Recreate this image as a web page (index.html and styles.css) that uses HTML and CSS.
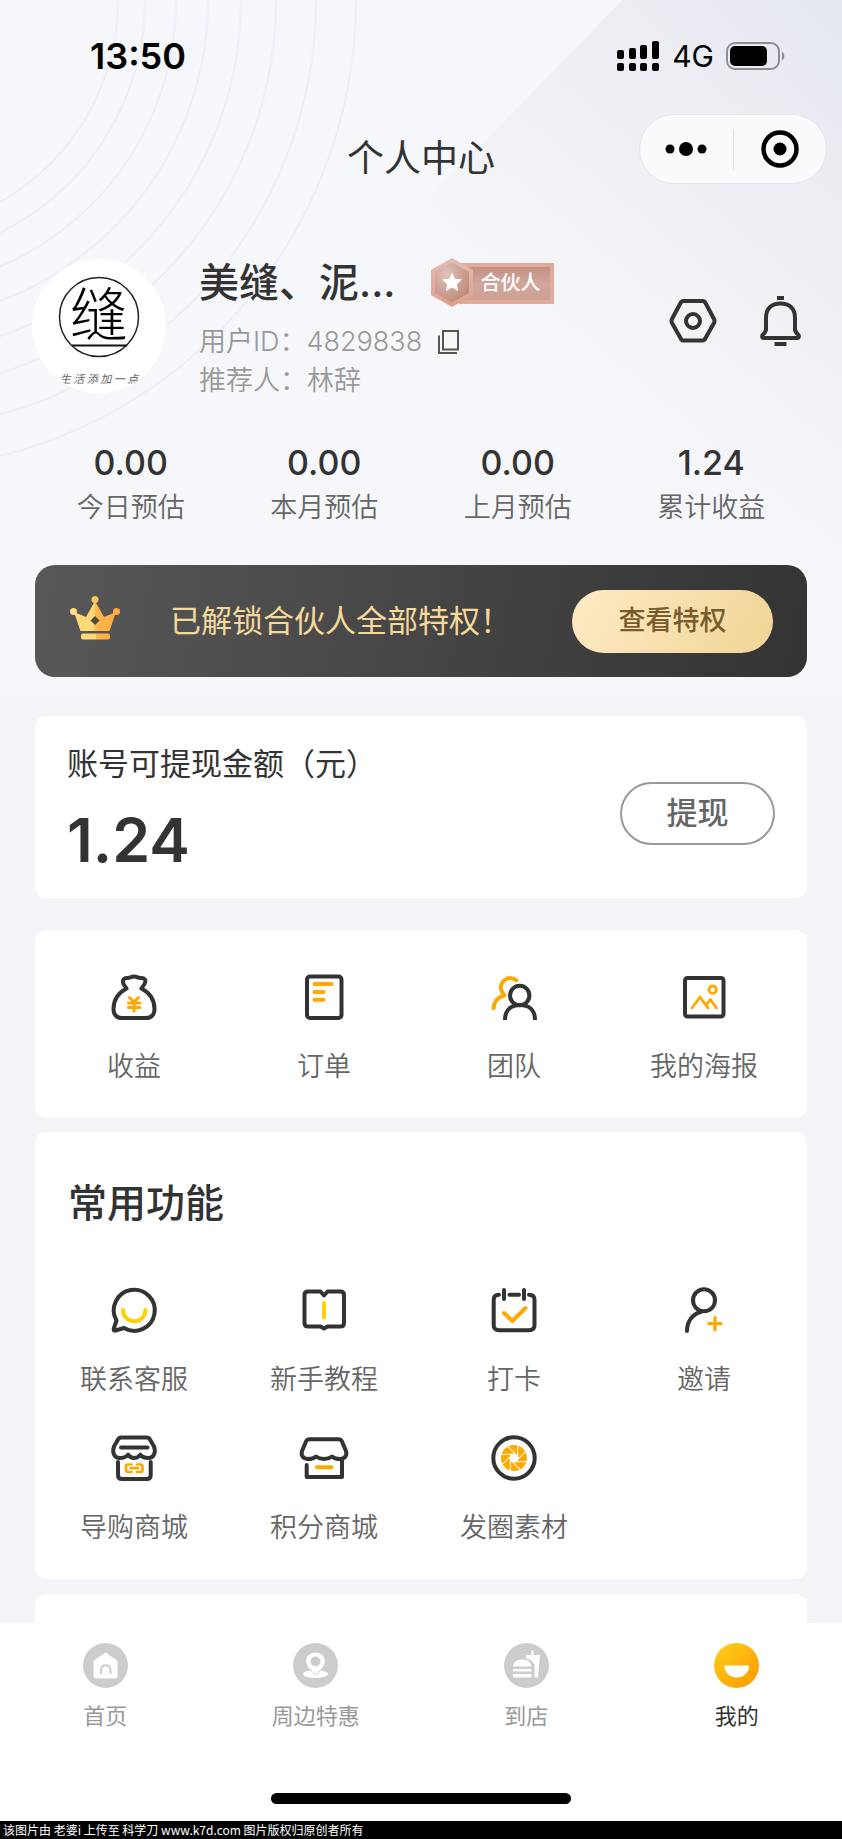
FILE: index.html
```html
<!DOCTYPE html>
<html lang="zh-CN">
<head>
<meta charset="utf-8">
<meta name="viewport" content="width=device-width, initial-scale=1">
<title>个人中心</title>
<link rel="stylesheet" href="styles.css">
</head>
<body>
<div class="page">
  <header class="hero">
    <svg class="hero-art" viewBox="0 0 842 694" preserveAspectRatio="xMinYMin slice" aria-hidden="true">
      <defs>
        <linearGradient id="sheen" gradientUnits="userSpaceOnUse" x1="800" y1="40" x2="500" y2="400">
          <stop offset="0" stop-color="#ebecf2"/>
          <stop offset="0.500" stop-color="#f0f1f5"/>
          <stop offset="1" stop-color="#f5f6f9" stop-opacity="0"/>
        </linearGradient>
        <linearGradient id="corner" gradientUnits="userSpaceOnUse" x1="842" y1="0" x2="730" y2="110">
          <stop offset="0" stop-color="#e5e8f0"/>
          <stop offset="1" stop-color="#e9eaf2" stop-opacity="0"/>
        </linearGradient>
      </defs>
      <path d="M623 0H842V694H560L300 330L397 230Z" fill="url(#sheen)"/>
      <path d="M640 0H842V300Z" fill="url(#corner)"/>
      <g fill="none" stroke="#eeeefa" stroke-width="2">
        <circle cx="-114" cy="0" r="232"/><circle cx="-114" cy="0" r="259"/>
        <circle cx="-114" cy="0" r="290"/><circle cx="-114" cy="0" r="322"/>
        <circle cx="-114" cy="0" r="355"/><circle cx="-114" cy="0" r="390"/>
        <circle cx="-114" cy="0" r="430"/><circle cx="-114" cy="0" r="470"/>
      </g>
    </svg>

    <div class="status">
      <span class="time">13:50</span>
      <div class="signals">
        <svg width="43" height="32" viewBox="0 0 43 32" aria-hidden="true">
          <rect x="0" y="10" width="7" height="9" rx="2"/><rect x="12" y="8" width="7" height="11" rx="2"/>
          <rect x="23" y="5" width="7" height="14" rx="2"/><rect x="35" y="1" width="7" height="18" rx="2"/>
          <rect x="0" y="23" width="7" height="8" rx="2"/><rect x="12" y="23" width="7" height="8" rx="2"/>
          <rect x="23" y="23" width="7" height="8" rx="2"/><rect x="35" y="23" width="7" height="8" rx="2"/>
        </svg>
        <span class="network">4G</span>
        <svg width="60" height="28" viewBox="0 0 60 28" aria-hidden="true">
          <rect x="1" y="1" width="52" height="26" rx="8" fill="none" stroke="#8d8e92" stroke-width="2"/>
          <rect x="4" y="4" width="37" height="20" rx="5"/>
          <path d="M56 9.500C59 11 59 17 56 18.500Z" fill="#8d8e92"/>
        </svg>
      </div>
    </div>

    <div class="nav">
      <h1 class="nav-title">个人中心</h1>
      <div class="capsule">
        <button class="capsule-btn" type="button" aria-label="更多">
          <svg width="42" height="16" viewBox="0 0 42 16"><circle cx="5" cy="8" r="4.500"/><circle cx="21" cy="8" r="7"/><circle cx="37" cy="8" r="4.500"/></svg>
        </button>
        <button class="capsule-btn capsule-close" type="button" aria-label="关闭">
          <svg width="38" height="38" viewBox="0 0 38 38"><circle cx="19" cy="19" r="16.500" fill="none" stroke="#000" stroke-width="4.500"/><circle cx="19" cy="19" r="6.500"/></svg>
        </button>
      </div>
    </div>

    <section class="profile">
      <svg class="avatar" viewBox="0 0 134 134" role="img" aria-label="头像">
        <defs><clipPath id="round"><circle cx="67" cy="67" r="67"/></clipPath></defs>
        <circle cx="67" cy="67" r="67" fill="#fff"/>
        <g clip-path="url(#round)">
          <circle cx="67" cy="58" r="39.500" fill="none" stroke="#222" stroke-width="1.500"/>
          <path d="M40 86.500H95" stroke="#111" stroke-width="2"/>
          <text class="avatar-char" x="67" y="77" text-anchor="middle">缝</text>
          <text class="avatar-motto" x="67" y="124" text-anchor="middle">生 活 添 加 一 点</text>
        </g>
      </svg>
      <div class="info">
        <div class="name-row">
          <h2 class="name">美缝、泥...</h2>
          <div class="badge">
            <svg class="badge-hex" width="42" height="50" viewBox="0 0 42 50" aria-hidden="true">
              <defs>
                <linearGradient id="rim" x1="0" y1="0" x2="0" y2="1"><stop offset="0" stop-color="#e2bdb4"/><stop offset="1" stop-color="#e09f86"/></linearGradient>
                <radialGradient id="core" cx="0.35" cy="0.3" r="0.8"><stop offset="0" stop-color="#dfc3bc"/><stop offset="1" stop-color="#bd8777"/></radialGradient>
              </defs>
              <path d="M21 0L42 12V37L21 49L0 37V12Z" fill="url(#rim)"/>
              <path d="M21 4.500L38 14V35L21 44.500L4 35V14Z" fill="url(#core)"/>
              <path d="M21 14.500L23.900 20.800L31 21.500L25.800 26.200L27.200 33L21 29.500L14.800 33L16.200 26.200L11 21.500L18.100 20.800Z" fill="#fff"/>
            </svg>
            <span class="badge-label">合伙人</span>
          </div>
        </div>
        <div class="meta">
          <span>用户ID：4829838</span>
          <button class="icon-btn" type="button" aria-label="复制">
            <svg width="22" height="26" viewBox="0 0 22 26" fill="none" stroke="#555" stroke-width="2"><rect x="5" y="2" width="15" height="18.500"/><path d="M1 6.500V24H19"/></svg>
          </button>
        </div>
        <div class="meta">推荐人：林辞</div>
      </div>
      <div class="actions">
        <button class="icon-btn" type="button" aria-label="设置">
          <svg width="48" height="50" viewBox="0 0 48 50" fill="none" stroke="#333" stroke-width="4" stroke-linejoin="round"><path d="M14.500 5H33.500Q35.500 5 36.500 7L45 23Q46 25 45 27L36.500 42Q35.500 44.500 33.500 44.500H14.500Q12.500 44.500 11.500 42L3 27Q2 25 3 23L11.500 7Q12.500 5 14.500 5Z"/><circle cx="24" cy="25" r="7"/></svg>
        </button>
        <button class="icon-btn" type="button" aria-label="消息">
          <svg width="42" height="50" viewBox="0 0 42 50" fill="none" stroke="#333" stroke-width="4"><path d="M17 2H24M14.500 48H26.500"/><path d="M6 22C6 12 12 7.500 20.500 7.500S35 12 35 22V34Q36 37 38.500 39Q39.500 42 37 42H4Q1.500 42 2.500 39Q5 37 6 34Z" stroke-linejoin="round"/></svg>
        </button>
      </div>
    </section>

    <dl class="stats">
      <div class="stat"><dd>0.00</dd><dt>今日预估</dt></div>
      <div class="stat"><dd>0.00</dd><dt>本月预估</dt></div>
      <div class="stat"><dd>0.00</dd><dt>上月预估</dt></div>
      <div class="stat"><dd>1.24</dd><dt>累计收益</dt></div>
    </dl>

    <section class="banner">
      <svg class="crown" width="50" height="44" viewBox="0 0 50 44" aria-hidden="true">
        <defs>
          <linearGradient id="gold" x1="0" y1="0" x2="1" y2="0"><stop offset="0" stop-color="#ffdb7c"/><stop offset="0.500" stop-color="#ffd673"/><stop offset="0.500" stop-color="#ffb74d"/><stop offset="1" stop-color="#ffaa43"/></linearGradient>
        </defs>
        <path d="M25 5L34 21L46 16L39.500 35H10.500L4 16L16 21Z" fill="url(#gold)"/>
        <circle cx="25" cy="3.500" r="3.500" fill="#ffc45c"/><circle cx="3.500" cy="15.500" r="3.500" fill="#ffdc85"/><circle cx="46.500" cy="15.500" r="3.500" fill="#ffaa43"/>
        <path d="M25 20L29.500 24.500L25 29L20.500 24.500Z" fill="#4d4a45"/>
        <rect x="11" y="37.500" width="29" height="6" rx="2" fill="url(#gold)"/>
      </svg>
      <p class="banner-text">已解锁合伙人全部特权！</p>
      <button class="banner-btn" type="button">查看特权</button>
    </section>
  </header>

  <main class="content">
    <section class="card balance">
      <div class="balance-info">
        <h2 class="balance-title">账号可提现金额（元）</h2>
        <p class="balance-value">1.24</p>
      </div>
      <button class="withdraw" type="button">提现</button>
    </section>

    <nav class="card shortcuts" aria-label="快捷入口">
      <div class="grid">
        <a class="item" href="#income">
          <svg class="icon" viewBox="0 0 48 48"><path d="M16.500 15.500C8 20 3.500 27 3.500 36C3.500 42 7 45 12 45H36C41 45 44.500 42 44.500 36C44.500 27 40 20 31.500 15.500M16.500 15.500L13.500 11C12 7 14 4.500 18 5C20 5 21 3.500 24 3.500C27 3.500 28 5 30 5C35 4.500 36.500 7 34.500 11L31.500 15.500"/><path class="accent" stroke-width="3" d="M19.500 24.500L24 29L28.500 24.500M24 29V38M18.500 30H30M18.500 34.500H30"/></svg>
          <span>收益</span>
        </a>
        <a class="item" href="#orders">
          <svg class="icon" viewBox="0 0 48 48"><rect x="7" y="3.500" width="34.500" height="41.500" rx="3"/><path class="accent" d="M14.500 11H31.500M14.500 19H23.500M14.500 26.700H23.500"/></svg>
          <span>订单</span>
        </a>
        <a class="item" href="#team">
          <svg class="icon butt" viewBox="0 0 48 48"><path class="accent" d="M27.500 8.500A9.300 9.300 0 1 0 13 20.500L14.500 22.500C8 24 3.500 29 3.500 36.700"/><circle cx="29.700" cy="22.500" r="9.700"/><path d="M15 47C15 37 21 32 30 32C39 32 45 37 45 47"/></svg>
          <span>团队</span>
        </a>
        <a class="item" href="#poster">
          <svg class="icon" viewBox="0 0 48 48"><rect x="5" y="5" width="38.500" height="38.500" rx="2.500"/><g class="accent" stroke-width="2.800"><circle cx="32.700" cy="16.700" r="3.700"/><path d="M12 35L20 24L28 35M26.500 32L30.300 26.500L36.500 35"/></g></svg>
          <span>我的海报</span>
        </a>
      </div>
    </nav>

    <section class="card functions">
      <h2 class="section-title">常用功能</h2>
      <div class="grid">
        <a class="item" href="#service">
          <svg class="icon" viewBox="0 0 48 48"><path d="M6.500 34.500A20.500 20.500 0 1 1 14 42L5.500 44.500Q3.500 45 3.700 43Z"/><path class="accent yellow" d="M13 24A11.200 11.200 0 0 0 35.400 24"/></svg>
          <span>联系客服</span>
        </a>
        <a class="item" href="#tutorial">
          <svg class="icon" viewBox="0 0 48 48"><path d="M24 9.500L20.500 5.500H8Q4.500 5.500 4.500 9V37Q4.500 40.500 8 40.500H20.500L24 42.500L27.500 40.500H40.500Q44 40.500 44 37V9Q44 5.500 40.500 5.500H27.500Z"/><path class="accent yellow" d="M24 17V31.500"/></svg>
          <span>新手教程</span>
        </a>
        <a class="item" href="#checkin">
          <svg class="icon" viewBox="0 0 48 48"><path d="M9 8.700Q3.700 8.700 3.700 14V39Q3.700 44.300 9 44.300H39Q44.500 44.300 44.500 39V14Q44.500 8.700 39 8.700M19.500 8.700H29M14 4V13M34 4V13"/><path class="accent" d="M14 27L22.300 35L35.500 22"/></svg>
          <span>打卡</span>
        </a>
        <a class="item" href="#invite">
          <svg class="icon" viewBox="0 0 48 48"><circle cx="24" cy="14.300" r="11"/><path d="M21 26C12 28 7 36 7 45"/><path class="accent" stroke-width="3.300" d="M29 37.700H41M35 31.700V43.700"/></svg>
          <span>邀请</span>
        </a>
        <a class="item" href="#guide-mall">
          <svg class="icon" viewBox="0 0 48 48"><path d="M11.500 3.500H36.500Q39 3.500 40 5.500L44 12.500C46.500 19 43 24 38.500 24C35 24 32 23 30.300 20.700C28.500 23 26.500 24 24 24C21.500 24 19.700 23 18 20.700C16 23 13 24 9.500 24C5 24 1.500 19 4 12.500L8 5.500Q9 3.500 11.500 3.500ZM11 13.500H37.500M8 28V41Q8 45 12 45H36.700Q40.700 45 40.700 41V28"/><path class="accent" stroke-width="2.700" d="M21.500 30.500H18Q16 30.500 16 32.500V36Q16 38 18 38H21.500M27 30.500H30.500Q32.500 30.500 32.500 32.500V36Q32.500 38 30.500 38H27M20.500 34.200H28"/></svg>
          <span>导购商城</span>
        </a>
        <a class="item" href="#points-mall">
          <svg class="icon" viewBox="0 0 48 48"><path d="M9.500 5.300H38.500Q41 5.300 42 7.500L46 17C47.500 22 44 25 40.500 25C37 25 34 24.500 32 22.500C30 24 27 25 24 25C21 25 18 24 16 22.500C14 24.500 11 25 7.500 25C4 25 .500 22 2 17L6 7.500Q7 5.300 9.500 5.300ZM6.700 31V43H42V26"/><path class="accent" d="M17 33.300H31.500"/></svg>
          <span>积分商城</span>
        </a>
        <a class="item" href="#material">
          <svg class="icon" viewBox="0 0 48 48"><circle cx="24" cy="24" r="20.700"/><circle cx="24" cy="24" r="13" fill="#ffa900" stroke="none"/>
            <g stroke="#fff" stroke-width="1" transform="translate(24 24)"><path id="blade" d="M-12.600-3.700H0"/><use href="#blade" transform="rotate(45)"/><use href="#blade" transform="rotate(90)"/><use href="#blade" transform="rotate(135)"/><use href="#blade" transform="rotate(180)"/><use href="#blade" transform="rotate(225)"/><use href="#blade" transform="rotate(270)"/><use href="#blade" transform="rotate(315)"/><circle r="4" fill="#fff"/></g></svg>
          <span>发圈素材</span>
        </a>
      </div>
    </section>

    <section class="card peek" aria-hidden="true"></section>
  </main>

  <footer class="bottom">
    <nav class="tabs" aria-label="主导航">
      <a class="tab" href="#home">
        <svg class="tab-icon" viewBox="0 0 45 45"><circle cx="22.500" cy="22.500" r="22.500" fill="#ccc"/><path d="M22.500 9.500L34 17.500Q34.500 18 34.500 19V33Q34.500 35.500 32 35.500H13Q10.500 35.500 10.500 33V19Q10.500 18 11 17.500Z" fill="#fff"/><path d="M18 31V27C18 20.500 27.500 20.500 27.500 27V31" fill="none" stroke="#ccc" stroke-width="2"/></svg>
        <span>首页</span>
      </a>
      <a class="tab" href="#nearby">
        <svg class="tab-icon" viewBox="0 0 45 45"><circle cx="22.500" cy="22.500" r="22.500" fill="#ccc"/><ellipse cx="22.500" cy="31" rx="12.500" ry="4" fill="#fff"/><path d="M22.500 32L15 24.500C8 13 19 9 22.500 9S37 13 30 24.500Z" fill="#fff" stroke="#ccc" stroke-width="1"/><circle cx="22.500" cy="18.500" r="5" fill="#ccc"/></svg>
        <span>周边特惠</span>
      </a>
      <a class="tab" href="#store">
        <svg class="tab-icon" viewBox="0 0 45 45"><circle cx="22.500" cy="22.500" r="22.500" fill="#ccc"/><path d="M9 23.500C9 14 27.500 14 27.500 23.500ZM9 26H27.500V28.500H9ZM9 31H27.500V33Q27.500 34.500 26 34.500H10.500Q9 34.500 9 33ZM27.500 7.500H29.500V12H36L34 34.500H30.500V22Q29 17 22 15.500V12H27.500Z" fill="#fff"/></svg>
        <span>到店</span>
      </a>
      <a class="tab active" href="#mine" aria-current="page">
        <svg class="tab-icon" viewBox="0 0 45 45"><defs><linearGradient id="sun" x1="0.100" y1="0.100" x2="0.900" y2="0.900"><stop offset="0" stop-color="#ffcb18"/><stop offset="1" stop-color="#ff9d04"/></linearGradient></defs><circle cx="22.500" cy="22.500" r="22.500" fill="url(#sun)"/><path d="M10.500 22.500H35C35 38.500 10.500 38.500 10.500 22.500Z" fill="#fff"/></svg>
        <span>我的</span>
      </a>
    </nav>
    <div class="home-bar"></div>
  </footer>
  <p class="credit">该图片由 老婆i 上传至 科学刀 www.k7d.com 图片版权归原创者所有</p>
</div>
</body>
</html>
```
FILE: styles.css
```css
* {
  box-sizing: border-box;
  margin: 0;
  padding: 0;
}

body {
  background: #f3f4f7;
  color: #333;
  font-family: Inter, "Noto Sans CJK SC", sans-serif;
  font-size: 27px;
  line-height: 38px;
}

h1, h2 { font-weight: 500; }
svg { display: block; flex: none; }
a { color: inherit; text-decoration: none; }

button {
  border: 0;
  background: none;
  color: inherit;
  font: inherit;
  cursor: pointer;
}

.page {
  display: flex;
  flex-direction: column;
  min-height: 100vh;
}

/* Header area */
.hero {
  position: relative;
  overflow: hidden;
  padding-bottom: 17px;
  background: #f5f7fa;
  isolation: isolate;
}

.hero-art {
  position: absolute;
  inset: 0;
  z-index: -1;
  width: 100%;
  height: 100%;
}

.status {
  display: flex;
  align-items: center;
  justify-content: space-between;
  padding: 34px 56px 36px 90px;
  color: #000;
  line-height: 44px;
}

.time {
  font-size: 36px;
  font-weight: 600;
}

.signals {
  display: flex;
  align-items: center;
  gap: 12px;
}

.network { font-size: 30px; }

.nav {
  display: grid;
  grid-template-columns: 1fr auto 1fr;
  align-items: center;
  padding: 0 15px;
}

.nav-title {
  grid-column: 2;
  padding-top: 20px;
  font-size: 37px;
  font-weight: 400;
  line-height: 50px;
}

.capsule {
  display: flex;
  align-items: center;
  justify-self: end;
  width: 188px;
  height: 70px;
  border: 1px solid #e6e7ea;
  border-radius: 35px;
  background: #f9fafb;
}

.capsule-btn {
  display: flex;
  flex: 1;
  align-items: center;
  justify-content: center;
  height: 40px;
}

.capsule-close { border-left: 1px solid #dfe0e3; }

.profile {
  display: flex;
  align-items: flex-start;
  margin-top: 75px;
  padding: 0 40px 0 32px;
}

.avatar {
  width: 134px;
  height: 134px;
  margin-right: 33px;
}

.avatar-char {
  font-family: "Noto Sans CJK SC", sans-serif;
  font-size: 58px;
  font-weight: 300;
}

.avatar-motto {
  fill: #666;
  font-family: "Noto Sans CJK SC", sans-serif;
  font-size: 11px;
  font-style: italic;
}

.info { flex: 1; }

.name-row {
  display: flex;
  align-items: center;
  gap: 36px;
  height: 48px;
  margin-bottom: 16px;
}

.name {
  font-size: 40px;
  line-height: 48px;
}

.badge {
  display: flex;
  align-items: center;
}

.badge-hex {
  position: relative;
  margin-right: -14px;
}

.badge-label {
  padding: 0 10px 0 17px;
  border: 4px solid #e0ab98;
  background: linear-gradient(#c38f82, #cfa79c 50%, #cda095);
  color: #fff;
  font-size: 20px;
  font-weight: 500;
  line-height: 33px;
}

.meta {
  display: flex;
  align-items: center;
  gap: 16px;
  margin-bottom: 1px;
  color: #999;
  font-weight: 350;
}

.actions {
  display: flex;
  gap: 43px;
  padding-top: 37px;
}

.stats {
  display: grid;
  grid-template-columns: repeat(4, 1fr);
  padding: 42px 34px 38px;
  text-align: center;
}

.stat {
  display: flex;
  flex-direction: column;
  gap: 6px;
}

.stat dd {
  font-size: 34px;
  font-weight: 500;
  line-height: 40px;
}

.stat dt {
  color: #666;
  font-weight: 350;
}

.banner {
  display: flex;
  align-items: center;
  gap: 50px;
  height: 112px;
  margin: 0 35px;
  padding: 0 34px 0 35px;
  border-radius: 20px;
  background: linear-gradient(100deg, #585858, #333);
}

.crown { margin-bottom: 6px; }

.banner-text {
  flex: 1;
  color: #f5d99b;
  font-size: 31px;
  white-space: nowrap;
}

.banner-btn {
  width: 201px;
  height: 63px;
  border-radius: 32px;
  background: linear-gradient(120deg, #feebc6, #f1d596);
  color: #795c2d;
  font-weight: 500;
}

/* Cards */
.content {
  display: flex;
  flex: 1;
  flex-direction: column;
  padding: 22px 35px 0;
}

.card {
  border-radius: 12px;
  background: #fff;
}

.balance {
  display: flex;
  align-items: center;
  justify-content: space-between;
  margin-bottom: 32px;
  padding: 28px 32px 26px;
}

.balance-title {
  margin-bottom: 24px;
  font-size: 31px;
  font-weight: 400;
  line-height: 40px;
}

.balance-value {
  font-size: 61px;
  font-weight: 600;
  line-height: 64px;
}

.withdraw {
  width: 155px;
  height: 63px;
  margin-top: 10px;
  border: 2px solid #999;
  border-radius: 32px;
  color: #666;
  font-size: 31px;
  font-weight: 500;
}

.shortcuts {
  margin-bottom: 14px;
  padding: 43px 8px 32px 4px;
}

.functions {
  margin-bottom: 15px;
  padding: 46px 8px 32px 4px;
}

.section-title {
  margin-bottom: 58px;
  padding-left: 29px;
  font-size: 39px;
  line-height: 50px;
}

.grid {
  display: grid;
  grid-template-columns: repeat(4, 1fr);
  row-gap: 35px;
}

.item {
  display: flex;
  flex-direction: column;
  align-items: center;
  gap: 27px;
  color: #666;
  font-weight: 350;
}

.icon {
  width: 48px;
  height: 48px;
  fill: none;
  stroke: #333;
  stroke-width: 4;
  stroke-linecap: round;
  stroke-linejoin: round;
  overflow: visible;
}

.icon.butt { stroke-linecap: butt; }
.icon .accent { stroke: #ffa900; }
.icon .yellow { stroke: #ffd000; }

.peek {
  flex: 1;
  min-height: 28px;
  border-radius: 12px 12px 0 0;
}

/* Bottom bar */
.bottom {
  padding: 20px 0 17px;
  background: #fff;
}

.tabs {
  display: grid;
  grid-template-columns: repeat(4, 1fr);
  margin-bottom: 62px;
}

.tab {
  display: flex;
  flex-direction: column;
  align-items: center;
  gap: 13px;
  color: #999;
  font-size: 22px;
  line-height: 30px;
}

.tab.active { color: #333; }

.tab-icon {
  width: 45px;
  height: 45px;
}

.home-bar {
  width: 300px;
  height: 11px;
  margin: 0 auto;
  border-radius: 6px;
  background: #000;
}

.credit {
  padding-left: 3px;
  background: #000;
  color: #fff;
  font-family: "Noto Sans CJK SC", sans-serif;
  font-size: 12px;
  line-height: 18px;
  white-space: nowrap;
}
```
